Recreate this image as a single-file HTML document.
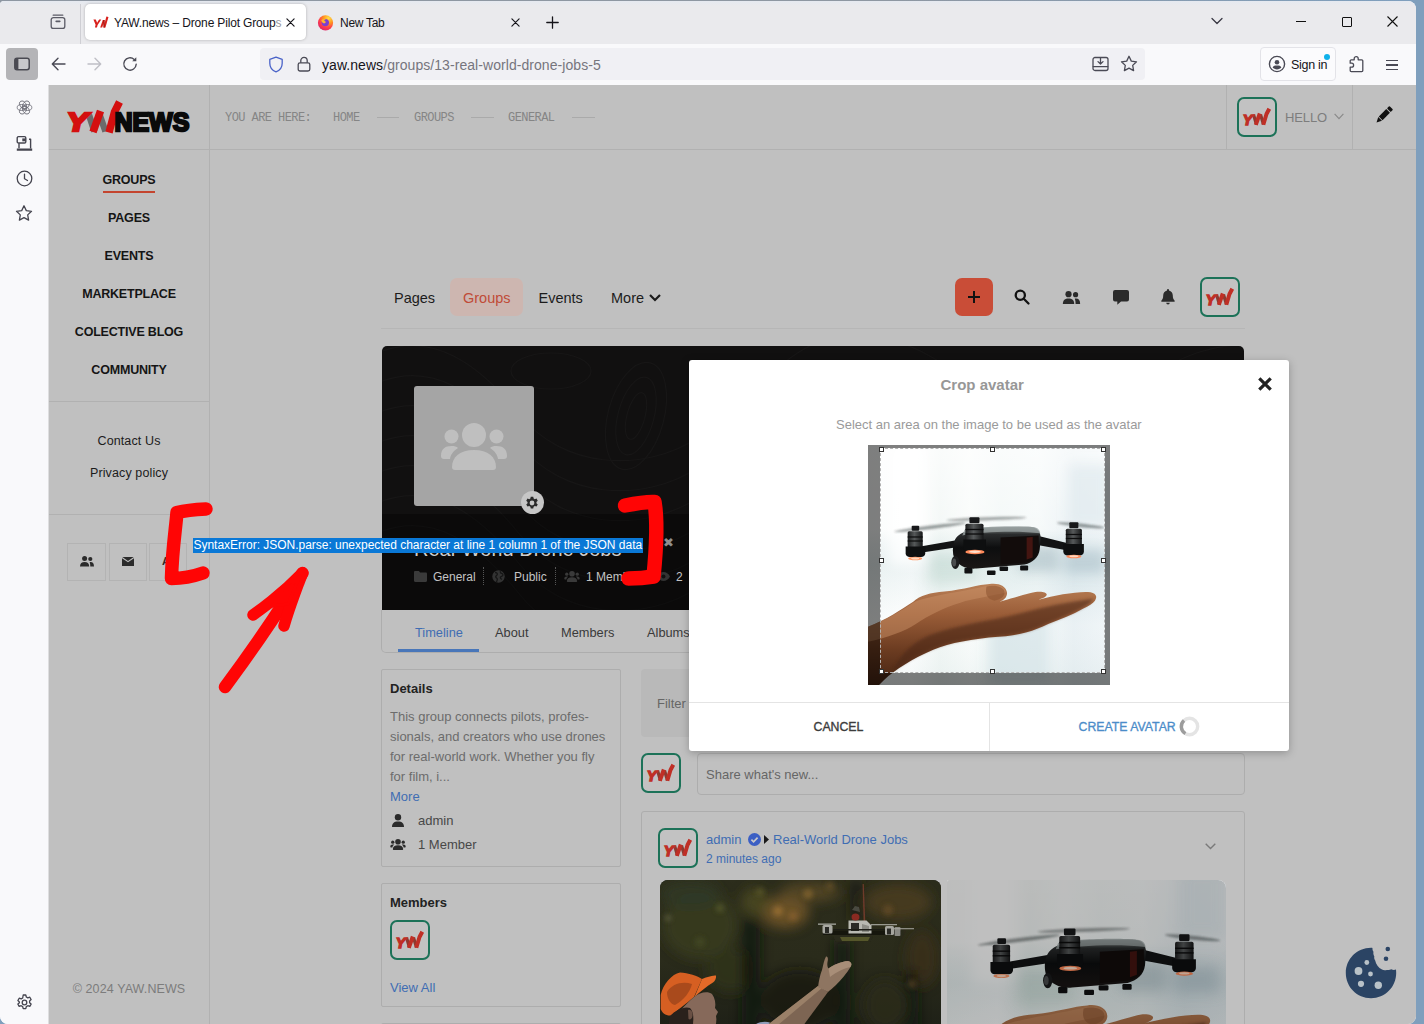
<!DOCTYPE html>
<html lang="en">
<head>
<meta charset="utf-8">
<title>YAW.news – Drone Pilot Groups</title>
<style>
*{box-sizing:border-box;margin:0;padding:0}
html,body{width:1424px;height:1024px;overflow:hidden}
body{position:relative;background:#7f9fbd;font-family:"Liberation Sans",sans-serif;color:#222;font-size:13px}
.abs{position:absolute}
#win{position:absolute;left:0;top:1px;width:1416px;height:1023px;background:#f9f9fb;border-radius:4px 8px 8px 8px;overflow:hidden}
#tabbar{position:absolute;left:0;top:0;width:1416px;height:43px;background:linear-gradient(#e5e9f0 0,#eaeaed 5px)}
#navbar{position:absolute;left:0;top:43px;width:1416px;height:41px;background:#f9f9fb}
#side{position:absolute;left:0;top:84px;width:48px;height:940px;background:#f9f9fb}
#page{position:absolute;left:49px;top:84px;width:1367px;height:940px;background:#c0c0c0;overflow:hidden}
.tab1{position:absolute;left:85px;top:3px;width:221px;height:36px;background:#fff;border-radius:5px;box-shadow:0 0 3px rgba(0,0,0,.25)}
.t{position:absolute;white-space:nowrap;line-height:1}
.ui{font-family:"Liberation Sans",sans-serif;font-size:12.5px;color:#15141a}
svg{position:absolute;overflow:visible}
/* page */
.ln{position:absolute;background:#b1b1b1}
.nav{position:absolute;left:0;width:160px;text-align:center;font-weight:bold;font-size:12.5px;letter-spacing:-.2px;color:#151515;line-height:1}
.lnk{position:absolute;left:0;width:160px;text-align:center;font-size:12.5px;letter-spacing:.12px;color:#1c1c1c;line-height:1}
.bc{position:absolute;top:26.5px;font-family:"Liberation Mono",monospace;font-size:12px;letter-spacing:-.57px;color:#858585;line-height:1;white-space:nowrap}
.av{position:absolute;width:40px;height:40px;border:2px solid #1c7258;border-radius:7px;background:#c2c2c2;overflow:hidden}
.av svg{left:-2px;top:-2px}
.sbtn{position:absolute;top:458px;width:39px;height:38px;border:1px solid #b3b3b3}
.tb{font-size:14.5px;color:#1c1c1c}
.card{position:absolute;border:1px solid #adadad;border-radius:2px}
.b{font-size:13px;line-height:1;position:absolute;white-space:nowrap}
.blue{color:#3f6db3}
.cm{font-size:12px;color:#c4c4c4}
.hd{position:absolute;width:5px;height:5px;background:#fff;border:1px solid #333}
</style>
</head>
<body>
<div class="abs" style="left:0;top:0;width:1400px;height:12px;background:linear-gradient(90deg,#8e97a2 0,#8e97a2 900px,#7f9fbd 1400px)"></div>
<div id="win">
  <div id="tabbar">
    <div class="abs" style="left:80px;top:3px;width:1px;height:40px;background:#cfcfd4"></div>
    <div class="tab1"></div>
    <!-- tab group icon -->
    <svg style="left:50px;top:13px" width="16" height="16" viewBox="0 0 16 16" fill="none" stroke="#5b5b66" stroke-width="1.3" stroke-linecap="round"><path d="M3.2 1.2h9.6"/><rect x="1.2" y="3.6" width="13.6" height="10.8" rx="2.2"/><path d="M6.2 7.4h3.6" stroke-width="1.6"/></svg>
    <!-- favicon YW -->
    <svg style="left:93px;top:14px" width="16" height="14" viewBox="0 0 16 14"><g fill="#d8201c"><path d="M0.4 4.6h2.4l1.3 3.1 2-3.1h2.2L4.6 10 4 12.6H1.9L2.6 9.7z"/><path d="M7.2 12.6 9.8 5h1.9L9.2 12.6z"/><path d="M10.4 12.6 13.4 1.4l2.1.7-3.1 10.5z"/><path d="M9.9 5h1.7l.5 7.6h-1.6z" fill="#b01813"/></g></svg>
    <div class="t ui" style="left:114px;top:15.7px;font-size:12px;letter-spacing:-.16px">YAW.news – Drone Pilot Group<span style="color:#9a9aa0">s</span></div>
    <svg style="left:285.5px;top:16.5px" width="9" height="9" viewBox="0 0 10 10" stroke="#15141a" stroke-width="1.3" stroke-linecap="round"><path d="M1 1l8 8M9 1l-8 8"/></svg>
    <!-- firefox icon -->
    <svg style="left:317px;top:13px" width="17" height="17" viewBox="0 0 17 17"><defs><radialGradient id="fx" cx="70%" cy="20%" r="90%"><stop offset="0" stop-color="#ffe14a"/><stop offset=".35" stop-color="#ff9a1f"/><stop offset=".7" stop-color="#ff3b4b"/><stop offset="1" stop-color="#d6246f"/></radialGradient></defs><circle cx="8.5" cy="8.8" r="7.6" fill="url(#fx)"/><circle cx="8.3" cy="8.6" r="3.7" fill="#7a3fd0"/><path d="M4.3 6.2c1.4-1.6 3.6-1.5 4.9-.4-1.4-.1-2 .6-1.9 1.3 1.2 0 1.7.9 1.2 1.6-1.3 1.3-3.6.500-4.2-2.5z" fill="#ffb52e"/></svg>
    <div class="t ui" style="left:340px;top:15.7px;font-size:12px;letter-spacing:-.28px">New Tab</div>
    <svg style="left:510.5px;top:16.5px" width="9" height="9" viewBox="0 0 10 10" stroke="#15141a" stroke-width="1.3" stroke-linecap="round"><path d="M1 1l8 8M9 1l-8 8"/></svg>
    <svg style="left:546px;top:15px" width="13" height="13" viewBox="0 0 13 13" stroke="#15141a" stroke-width="1.3" stroke-linecap="round"><path d="M6.5.8v11.4M.8 6.5h11.4"/></svg>
    <!-- window controls -->
    <svg style="left:1211px;top:16px" width="12" height="8" viewBox="0 0 12 8" fill="none" stroke="#3a3944" stroke-width="1.3" stroke-linecap="round" stroke-linejoin="round"><path d="M1 1.5l5 5 5-5"/></svg>
    <div class="abs" style="left:1296px;top:20px;width:10px;height:1px;background:#111"></div>
    <div class="abs" style="left:1342px;top:16px;width:10px;height:10px;border:1px solid #111;border-radius:1px"></div>
    <svg style="left:1387px;top:15px" width="11" height="11" viewBox="0 0 11 11" stroke="#111" stroke-width="1.1"><path d="M.5.5l10 10M10.5.500l-10 10"/></svg>
  </div>
  <div id="navbar">
    <div class="abs" style="left:6px;top:4px;width:32px;height:32px;border-radius:4px;background:#b4b4b7"></div>
    <svg style="left:14px;top:13px" width="16" height="14" viewBox="0 0 16 14"><rect x=".8" y="1.3" width="14.4" height="11.4" rx="2.2" fill="#c9c9cc" stroke="#4a4a52" stroke-width="1.5"/><path d="M.8 3.5a2.2 2.2 0 0 1 2.2-2.2h1.4v11.4H3a2.2 2.2 0 0 1-2.2-2.2z" fill="#4a4a52"/></svg>
    <!-- back / fwd / reload -->
    <svg style="left:51px;top:13px" width="15" height="14" viewBox="0 0 15 14" fill="none" stroke="#4a4a55" stroke-width="1.4" stroke-linecap="round" stroke-linejoin="round"><path d="M14 7H1.5M7 1.3 1.3 7 7 12.7"/></svg>
    <svg style="left:87px;top:13px" width="15" height="14" viewBox="0 0 15 14" fill="none" stroke="#bfbfc6" stroke-width="1.4" stroke-linecap="round" stroke-linejoin="round"><path d="M1 7h12.5M8 1.3 13.7 7 8 12.7"/></svg>
    <svg style="left:122px;top:12px" width="16" height="16" viewBox="0 0 16 16" fill="none" stroke="#4a4a55" stroke-width="1.4" stroke-linecap="round"><path d="M14.2 8.3a6.2 6.2 0 1 1-2-4.9"/><path d="M14.3 1.2v4.1h-4.1z" fill="#4a4a55" stroke="none"/></svg>
    <div class="abs" style="left:260px;top:4px;width:885px;height:32px;border-radius:4px;background:#f0f0f4"></div>
    <!-- shield -->
    <svg style="left:268px;top:12px" width="16" height="17" viewBox="0 0 16 17" fill="none" stroke="#4a63c8" stroke-width="1.3" stroke-linejoin="round"><path d="M8 1.1 1.8 3.4v3.8c0 4 2.5 7.2 6.2 8.6 3.7-1.4 6.2-4.6 6.2-8.6V3.4z"/></svg>
    <!-- lock -->
    <svg style="left:297px;top:12px" width="14" height="16" viewBox="0 0 14 16" fill="none" stroke="#4a4a55" stroke-width="1.3"><rect x="1.2" y="6.8" width="11.6" height="8.2" rx="1.8"/><path d="M3.8 6.8V4.6a3.2 3.2 0 0 1 6.4 0v2.2"/></svg>
    <div class="t" style="left:322px;top:13.5px;font-size:14px;color:#15141a;letter-spacing:.06px">yaw.news<span style="color:#76757d">/groups/13-real-world-drone-jobs-5</span></div>
    <!-- pocket / download -->
    <svg style="left:1092px;top:12px" width="17" height="16" viewBox="0 0 17 16" fill="none" stroke="#4a4a55" stroke-width="1.3" stroke-linecap="round" stroke-linejoin="round"><rect x="1" y="1.5" width="15" height="13" rx="2"/><path d="M1.2 10.6h14.6M8.5 1.8v5.6M6 5.6l2.5 2.4L11 5.6"/></svg>
    <svg style="left:1120px;top:11px" width="18" height="17" viewBox="0 0 18 17" fill="none" stroke="#4a4a55" stroke-width="1.3" stroke-linejoin="round"><path d="M9 1.3l2.3 4.8 5.2.7-3.8 3.6.9 5.2L9 13.1l-4.6 2.5.9-5.2L1.5 6.8l5.2-.7z"/></svg>
    <div class="abs" style="left:1260px;top:3px;width:76px;height:34px;border-radius:4px;background:#fbfbfd;border:1px solid #e3e3e8"></div>
    <svg style="left:1268px;top:11px" width="18" height="18" viewBox="0 0 18 18" fill="none" stroke="#4a4a55" stroke-width="1.4"><circle cx="9" cy="9" r="7.6"/><circle cx="9" cy="7.3" r="2.3" fill="#4a4a55" stroke="none"/><path d="M4.6 12.3c.8-1.3 2.2-1.7 4.4-1.7s3.6.4 4.4 1.7c-1 1.3-2.6 2.1-4.4 2.1s-3.4-.8-4.4-2.1z" fill="#4a4a55" stroke="none"/></svg>
    <div class="t ui" style="left:1291px;top:14.5px;font-size:12.5px;letter-spacing:-.3px">Sign in</div>
    <div class="abs" style="left:1324px;top:10px;width:6px;height:6px;border-radius:3px;background:#10b1ea"></div>
    <!-- puzzle -->
    <svg style="left:1348px;top:11px" width="17" height="18" viewBox="0 0 17 18" fill="none" stroke="#4a4a55" stroke-width="1.3" stroke-linejoin="round"><path d="M6.2 4.8V3.6a2 2 0 0 1 4 0v1.2h3.6a1 1 0 0 1 1 1v9.8a1 1 0 0 1-1 1H3.2a1 1 0 0 1-1-1v-3.4h1.4a2 2 0 0 0 0-4H2.2V5.8a1 1 0 0 1 1-1z"/></svg>
    <div class="abs" style="left:1386px;top:16px;width:12px;height:1.4px;background:#4a4a55"></div>
    <div class="abs" style="left:1386px;top:20.3px;width:12px;height:1.4px;background:#4a4a55"></div>
    <div class="abs" style="left:1386px;top:24.6px;width:12px;height:1.4px;background:#4a4a55"></div>
  </div>
  <div id="side">
    <!-- ai swirl -->
    <svg style="left:16px;top:14px" width="17" height="17" viewBox="0 0 17 17" fill="none" stroke="#6e6e78" stroke-width=".85"><ellipse cx="8.5" cy="5.6" rx="3" ry="4.4" transform="rotate(30 8.5 8.5)"/><ellipse cx="8.5" cy="5.6" rx="3" ry="4.4" transform="rotate(150 8.5 8.5)"/><ellipse cx="8.5" cy="5.6" rx="3" ry="4.4" transform="rotate(270 8.5 8.5)"/><ellipse cx="8.5" cy="11.4" rx="3" ry="4.4" transform="rotate(30 8.5 8.5)"/><ellipse cx="8.5" cy="11.4" rx="3" ry="4.4" transform="rotate(150 8.5 8.5)"/><ellipse cx="8.5" cy="11.4" rx="3" ry="4.4" transform="rotate(270 8.5 8.5)"/></svg>
    <!-- synced tabs -->
    <svg style="left:16px;top:50px" width="17" height="17" viewBox="0 0 17 17" fill="none" stroke="#45454f" stroke-width="1.4" stroke-linejoin="round"><rect x="1.2" y="1.6" width="8.6" height="6.4" rx="1.3"/><rect x="6.3" y="3.4" width="3.5" height="2.9" fill="#45454f" stroke="none"/><path d="M13 4.2h1.6v9.4"/><path d="M3 8.2v5"/><path d="M.8 14.6h15.4" stroke-width="2.2"/></svg>
    <!-- clock -->
    <svg style="left:16px;top:85px" width="17" height="17" viewBox="0 0 17 17" fill="none" stroke="#45454f" stroke-width="1.3" stroke-linecap="round"><circle cx="8.5" cy="8.5" r="7.3"/><path d="M8.5 4.2v4.5l3 1.8"/></svg>
    <!-- star -->
    <svg style="left:15px;top:119px" width="18" height="18" viewBox="0 0 18 17" fill="none" stroke="#45454f" stroke-width="1.3" stroke-linejoin="round"><path d="M9 1.3l2.3 4.8 5.2.7-3.8 3.6.9 5.2L9 13.1l-4.6 2.5.9-5.2L1.5 6.8l5.2-.7z"/></svg>
    <!-- gear -->
    <svg style="left:16px;top:909px" width="17" height="17" viewBox="0 0 17 17" fill="none" stroke="#45454f" stroke-width="1.3" stroke-linejoin="round"><circle cx="8.5" cy="8.5" r="2.3"/><path d="M7.2 1h2.6l.5 2 1.5.9 2-.7 1.3 2.3-1.5 1.4v1.8l1.5 1.4-1.3 2.3-2-.7-1.5.9-.5 2H7.2l-.5-2-1.5-.9-2 .7-1.3-2.3 1.5-1.4V7.9L1.9 6.5l1.3-2.3 2 .7 1.5-.9z"/></svg>
  </div>
  <div class="abs" style="left:48px;top:84px;width:1px;height:940px;background:#dededf"></div>
  <div id="page">
    <!-- coordinates inside #page are target minus (49,85) -->
    <!-- header lines -->
    <div class="ln" style="left:160px;top:0;width:1px;height:940px"></div>
    <div class="ln" style="left:0;top:64px;width:1367px;height:1px"></div>
    <div class="ln" style="left:1177px;top:0;width:1px;height:64px"></div>
    <div class="ln" style="left:1303px;top:0;width:1px;height:64px"></div>
    <!-- logo -->
    <svg style="left:16px;top:12px" width="130" height="40" viewBox="65 97 130 40">
      <g stroke-linecap="butt" fill="none">
        <path d="M88.5 113.5 94.5 131.5" stroke="#6b6b6b" stroke-width="6.5"/>
        <path d="M99 113 105.5 131.5" stroke="#6b6b6b" stroke-width="6.5"/>
        <path d="M93 132 100.5 111" stroke="#d40f0f" stroke-width="7.5"/>
        <path d="M109 132.5 114.5 112 119.5 102" stroke="#d40f0f" stroke-width="7.5" stroke-linejoin="round"/>
      </g>
      <text x="66.8" y="131.2" font-family="Liberation Sans, sans-serif" font-weight="bold" font-style="italic" font-size="26.5" fill="#d40f0f" stroke="#d40f0f" stroke-width="2.6" textLength="21" lengthAdjust="spacingAndGlyphs">Y</text>
      <text x="114.4" y="130.8" font-family="Liberation Sans, sans-serif" font-weight="bold" font-size="26.5" fill="#0a0a0a" stroke="#0a0a0a" stroke-width="2.4" textLength="75" lengthAdjust="spacingAndGlyphs">NEWS</text>
    </svg>
    <!-- breadcrumb -->
    <div class="bc" style="left:176px">YOU ARE HERE:</div>
    <div class="bc" style="left:284px">HOME</div>
    <div class="ln" style="left:328px;top:31.5px;width:22px;height:1px;background:#aaa"></div>
    <div class="bc" style="left:365px">GROUPS</div>
    <div class="ln" style="left:422px;top:31.5px;width:23px;height:1px;background:#aaa"></div>
    <div class="bc" style="left:459px">GENERAL</div>
    <div class="ln" style="left:523px;top:31.5px;width:23px;height:1px;background:#aaa"></div>
    <!-- header user -->
    <div class="av" style="left:1188px;top:12px"><svg width="40" height="40" viewBox="0 0 40 40"><g fill="none" stroke-linecap="butt"><path d="M16.5 17.5 19.5 27.5" stroke="#8c3a30" stroke-width="3.2"/><path d="M23.5 17.5 26.5 27.5" stroke="#8c3a30" stroke-width="3.2"/><path d="M18.8 27.8 22.8 16.5" stroke="#bf2f26" stroke-width="4"/><path d="M26.3 27.8 29.5 17 32.3 11.8" stroke="#bf2f26" stroke-width="4" stroke-linejoin="round"/></g><text x="5.8" y="27.6" font-family="Liberation Sans, sans-serif" font-weight="bold" font-style="italic" font-size="14.5" fill="#bf2f26" stroke="#bf2f26" stroke-width="1.4">Y</text></svg></div>
    <div class="t" style="left:1236px;top:25.5px;font-size:13px;color:#7d7d7d;letter-spacing:-.1px">HELLO</div>
    <svg style="left:1285px;top:28px" width="10" height="7" viewBox="0 0 10 7" fill="none" stroke="#8a8a8a" stroke-width="1.2"><path d="M.6.8l4.4 4.8L9.4.8"/></svg>
    <svg style="left:1326px;top:21px" width="18" height="18" viewBox="0 0 18 18"><g transform="rotate(45 9 9)" fill="#111"><rect x="6.4" y="-1.2" width="5.2" height="3.4" rx=".8"/><rect x="6.4" y="3.2" width="5.2" height="10.5"/><path d="M6.4 14.5h5.2L9 19.6z"/></g></svg>

    <!-- sidebar nav -->
    <div class="nav" style="top:89px">GROUPS</div>
    <div class="abs" style="left:54px;top:105.5px;width:52px;height:2px;background:#c4452f"></div>
    <div class="nav" style="top:127px">PAGES</div>
    <div class="nav" style="top:165px">EVENTS</div>
    <div class="nav" style="top:203px">MARKETPLACE</div>
    <div class="nav" style="top:241px">COLECTIVE BLOG</div>
    <div class="nav" style="top:279px">COMMUNITY</div>
    <div class="ln" style="left:0;top:316px;width:160px;height:1px"></div>
    <div class="lnk" style="top:350px">Contact Us</div>
    <div class="lnk" style="top:382px">Privacy policy</div>
    <div class="ln" style="left:0;top:429px;width:160px;height:1px"></div>
    <div class="sbtn" style="left:18px"></div>
    <div class="sbtn" style="left:60px;width:38px"></div>
    <div class="sbtn" style="left:100px;width:38px"></div>
    <svg style="left:31px;top:471px" width="14" height="11" viewBox="0 0 14 11" fill="#2b2b2b"><circle cx="4.6" cy="2.6" r="2.5"/><path d="M0 10.5C0 7.4 1.8 6 4.6 6s4.6 1.4 4.6 4.5z"/><circle cx="10.3" cy="3" r="2.1"/><path d="M9.6 6.2c2.7-.5 4.4.9 4.4 4.3h-3.7c0-1.9-.2-3.2-.7-4.3z"/></svg>
    <svg style="left:73px;top:472px" width="12" height="9" viewBox="0 0 12 9" fill="#2b2b2b"><path d="M0 1.3 6 5.3l6-4V9H0z"/><path d="M.3 0h11.4L6 3.9z"/></svg>
    <div class="t" style="left:113px;top:471px;font-size:11px;font-weight:bold;color:#2b2b2b">A</div>
    <div class="lnk" style="top:897.5px;color:#7c7c7c;font-size:12.5px;letter-spacing:.1px">© 2024 YAW.NEWS</div>

    <!-- toolbar -->
    <div class="t tb" style="left:345px;top:206px">Pages</div>
    <div class="abs" style="left:401px;top:193px;width:73px;height:38px;border-radius:7px;background:#cdb6b0"></div>
    <div class="t tb" style="left:414px;top:206px;color:#c04b37">Groups</div>
    <div class="t tb" style="left:489.5px;top:206px">Events</div>
    <div class="t tb" style="left:562px;top:206px">More</div>
    <svg style="left:600px;top:209px" width="12" height="8" viewBox="0 0 12 8" fill="none" stroke="#1a1a1a" stroke-width="2.2"><path d="M1 1l5 5 5-5"/></svg>
    <div class="abs" style="left:906px;top:193px;width:38px;height:38px;border-radius:7px;background:#c94d37"></div>
    <div class="abs" style="left:919px;top:210.7px;width:12px;height:2.6px;background:#111"></div>
    <div class="abs" style="left:923.7px;top:206px;width:2.6px;height:12px;background:#111"></div>
    <svg style="left:965px;top:204px" width="16" height="16" viewBox="0 0 16 16" fill="none" stroke="#111" stroke-width="2.3" stroke-linecap="round"><circle cx="6.3" cy="6.3" r="4.6"/><path d="M10 10l4.5 4.5"/></svg>
    <svg style="left:1012.5px;top:205.5px" width="19" height="13" viewBox="0 0 14 10.5" fill="#2b2b2b"><circle cx="4.6" cy="2.6" r="2.5"/><path d="M0 10.5C0 7.4 1.8 6 4.6 6s4.6 1.4 4.6 4.5z"/><circle cx="10.3" cy="3" r="2.1"/><path d="M9.6 6.2c2.7-.5 4.4.9 4.4 4.3h-3.7c0-1.9-.2-3.2-.7-4.3z"/></svg>
    <svg style="left:1064px;top:205px" width="16" height="15" viewBox="0 0 16 15" fill="#2b2b2b"><path d="M2 0h12a2 2 0 0 1 2 2v7.5a2 2 0 0 1-2 2H8L4.3 14.7v-3.2H2a2 2 0 0 1-2-2V2a2 2 0 0 1 2-2z"/></svg>
    <svg style="left:1112px;top:204px" width="14" height="16" viewBox="0 0 14 16" fill="#2b2b2b"><path d="M7 0a1 1 0 0 1 1 1v.6c2.3.5 3.8 2.4 3.8 4.9 0 2.6.6 3.8 1.7 4.9.5.5.2 1.4-.6 1.4H1.1c-.8 0-1.1-.9-.6-1.4C1.6 10.3 2.2 9.1 2.2 6.5c0-2.5 1.5-4.4 3.8-4.9V1a1 1 0 0 1 1-1z"/><path d="M5.2 13.8h3.6a1.8 1.8 0 0 1-3.6 0z"/></svg>
    <div class="av" style="left:1151px;top:192px"><svg width="40" height="40" viewBox="0 0 40 40"><g fill="none" stroke-linecap="butt"><path d="M16.5 17.5 19.5 27.5" stroke="#8c3a30" stroke-width="3.2"/><path d="M23.5 17.5 26.5 27.5" stroke="#8c3a30" stroke-width="3.2"/><path d="M18.8 27.8 22.8 16.5" stroke="#bf2f26" stroke-width="4"/><path d="M26.3 27.8 29.5 17 32.3 11.8" stroke="#bf2f26" stroke-width="4" stroke-linejoin="round"/></g><text x="5.8" y="27.6" font-family="Liberation Sans, sans-serif" font-weight="bold" font-style="italic" font-size="14.5" fill="#bf2f26" stroke="#bf2f26" stroke-width="1.4">Y</text></svg></div>
    <div class="ln" style="left:332px;top:243px;width:864px;height:1px;background:#b6b6b6"></div>
    <!-- cover : target (381,346)-(1245,610) => page (332,261) 864x264 -->
    <div class="abs" id="cover" style="left:333px;top:261px;width:862px;height:264px;border-radius:5px 5px 0 0;background:#111010;overflow:hidden"><div class="abs" style="left:-1px;top:0;width:864px;height:264px">
      <svg style="left:0;top:0" width="864" height="264" viewBox="0 0 864 264" fill="none" stroke="#171616" stroke-width="1.2">
        <path d="M-10 40c60-30 110 10 150 60s120 60 180 20 90-110 170-100 110 80 190 70 120-70 200-60"/>
        <path d="M-10 70c60-30 110 10 150 60s120 60 180 20 90-110 170-100 110 80 190 70 120-70 200-60"/>
        <path d="M-10 100c60-30 110 10 150 60s120 60 180 20 90-110 170-100 110 80 190 70 120-70 200-60"/>
        <path d="M-10 130c60-30 110 10 150 60s120 60 180 20 90-110 170-100 110 80 190 70 120-70 200-60"/>
        <path d="M-10 160c60-30 110 10 150 60s120 60 180 20 90-110 170-100 110 80 190 70 120-70 200-60"/>
        <path d="M-10 190c60-30 110 10 150 60s120 60 180 20 90-110 170-100 110 80 190 70 120-70 200-60"/>
        <path d="M-10 10c60-30 110 10 150 60s120 60 180 20 90-110 170-100 110 80 190 70 120-70 200-60"/>
        <ellipse cx="255" cy="70" rx="28" ry="55" transform="rotate(15 255 70)"/>
        <ellipse cx="255" cy="70" rx="18" ry="40" transform="rotate(15 255 70)"/>
        <ellipse cx="255" cy="70" rx="9" ry="24" transform="rotate(15 255 70)"/>
        <ellipse cx="170" cy="25" rx="40" ry="18"/>
      </svg>
      <div class="abs" style="left:0;top:168px;width:864px;height:96px;background:rgba(0,0,0,.35)"></div>
      <!-- avatar placeholder -->
      <div class="abs" style="left:33px;top:40px;width:120px;height:120px;border-radius:3px;background:#a5a5a5"></div>
      <svg style="left:60px;top:77px" width="66" height="47" viewBox="0 0 66 47" fill="#bfbfbf"><circle cx="33" cy="12" r="12"/><path d="M14 47c-2 0-3-1-3-3 0-10 8-17 22-17s22 7 22 17c0 2-1 3-3 3z"/><circle cx="10.5" cy="13.5" r="7"/><path d="M3 36c-2 0-3-1-3-3 0-7 4-10 10.5-10 3 0 5 .5 6.5 2-5 3-7.5 7-8 11z"/><circle cx="55.5" cy="13.5" r="7"/><path d="M63 36c2 0 3-1 3-3 0-7-4-10-10.5-10-3 0-5 .5-6.5 2 5 3 7.5 7 8 11z"/></svg>
      <div class="abs" style="left:139.5px;top:145px;width:23px;height:23px;border-radius:12px;background:#c6c6c6"></div>
      <svg style="left:144px;top:149.5px" width="14" height="14" viewBox="0 0 17 17" fill="#2a2a2a"><path fill-rule="evenodd" d="M7 .8h3l.5 2.2 1.4.8 2.1-.7 1.5 2.6-1.6 1.5v1.6l1.6 1.5-1.5 2.6-2.1-.7-1.4.8-.5 2.2H7l-.5-2.2-1.4-.8-2.1.7-1.5-2.6 1.6-1.5V7.2L1.5 5.7 3 3.1l2.1.7 1.4-.8zM8.5 5.6a2.9 2.9 0 1 0 0 5.8 2.9 2.9 0 0 0 0-5.8z"/></svg>
      <!-- title + meta -->
      <div class="t" style="left:33px;top:192.5px;font-size:20px;color:#cfcfcf">Real-World Drone Jobs</div>
      <svg style="left:33px;top:225px" width="13" height="11" viewBox="0 0 13 11" fill="#3a3a3a"><path d="M1.2 0h3.6l1.4 1.6h5.6c.7 0 1.2.5 1.2 1.2v7c0 .7-.5 1.2-1.2 1.2H1.2C.5 11 0 10.5 0 9.8V1.2C0 .5.5 0 1.2 0z"/></svg>
      <div class="t cm" style="left:52px;top:225px">General</div>
      <div class="abs" style="left:102px;top:221px;width:0;height:18px;border-left:1px dotted #555"></div>
      <svg style="left:111px;top:224px" width="13" height="13" viewBox="0 0 13 13"><circle cx="6.5" cy="6.5" r="6.2" fill="#333"/><path d="M3 2.5c1.5 0 2.5.8 2.3 2s-1.8 1.2-1.6 2.4 1.5.9 1.6 2.2-.6 2-.8 2.9M8.5 1.2c-.6 1 .2 1.8 1.2 2.2s1.6 1.2 1 2.2-1.7.5-2.2 1.5.4 1.8 1.4 2.3" stroke="#161616" stroke-width="1.3" fill="none"/></svg>
      <div class="t cm" style="left:133px;top:225px">Public</div>
      <div class="abs" style="left:174px;top:221px;width:0;height:18px;border-left:1px dotted #555"></div>
      <svg style="left:182.5px;top:225px" width="16" height="11" viewBox="0 0 66 47" fill="#3a3a3a"><circle cx="33" cy="12" r="12"/><path d="M14 47c-2 0-3-1-3-3 0-10 8-17 22-17s22 7 22 17c0 2-1 3-3 3z"/><circle cx="10.5" cy="13.5" r="7"/><path d="M3 36c-2 0-3-1-3-3 0-7 4-10 10.5-10 3 0 5 .5 6.5 2-5 3-7.5 7-8 11z"/><circle cx="55.5" cy="13.5" r="7"/><path d="M63 36c2 0 3-1 3-3 0-7-4-10-10.5-10-3 0-5 .5-6.5 2 5 3 7.5 7 8 11z"/></svg>
      <div class="t cm" style="left:205px;top:225px">1 Member</div>
      <svg style="left:276px;top:226px" width="13" height="9" viewBox="0 0 13 9"><path d="M0 4.5C1.5 1.7 3.8 0 6.5 0S11.5 1.7 13 4.5C11.5 7.3 9.2 9 6.5 9S1.5 7.3 0 4.5z" fill="#333"/><circle cx="6.5" cy="4.5" r="2" fill="#111"/></svg>
      <div class="t cm" style="left:295px;top:225px">2</div>
      <div class="t" style="left:282px;top:190px;font-size:13px;color:#8e8e8e;font-family:'DejaVu Sans',sans-serif">✖</div>
    </div></div>

    <!-- profile tabs : target (381,610)-(1245,652) -->
    <div class="abs" style="left:332px;top:525px;width:864px;height:43px;border:1px solid #adadad;border-top:0;border-radius:0 0 5px 5px"></div>
    <div class="b blue" style="left:366px;top:542px;font-size:12.8px">Timeline</div>
    <div class="abs" style="left:349px;top:564px;width:81px;height:3px;background:#4876b9"></div>
    <div class="b" style="left:446px;top:542px;color:#3a3a3a;font-size:12.8px">About</div>
    <div class="b" style="left:512px;top:542px;color:#3a3a3a;font-size:12.8px">Members</div>
    <div class="b" style="left:598px;top:542px;color:#3a3a3a;font-size:12.8px">Albums</div>

    <!-- Details card : target (381,669)-(621,866) -->
    <div class="card" style="left:332px;top:584px;width:240px;height:198px"></div>
    <div class="b" style="left:341px;top:597px;font-weight:bold;color:#222">Details</div>
    <div class="b" style="left:341px;top:625px;color:#6c6c6c">This group connects pilots, profes-</div>
    <div class="b" style="left:341px;top:645px;color:#6c6c6c">sionals, and creators who use drones</div>
    <div class="b" style="left:341px;top:665px;color:#6c6c6c">for real-world work. Whether you fly</div>
    <div class="b" style="left:341px;top:685px;color:#6c6c6c">for film, i...</div>
    <div class="b blue" style="left:341px;top:705px">More</div>
    <svg style="left:343px;top:729px" width="12" height="13" viewBox="0 0 12 13" fill="#2b2b2b"><circle cx="6" cy="3.2" r="3.2"/><path d="M0 13c0-3.6 1.8-5.6 6-5.6s6 2 6 5.6z"/></svg>
    <div class="b" style="left:369px;top:729px;color:#484848">admin</div>
    <svg style="left:341px;top:754px" width="16" height="11" viewBox="0 0 66 47" fill="#2b2b2b"><circle cx="33" cy="12" r="12"/><path d="M14 47c-2 0-3-1-3-3 0-10 8-17 22-17s22 7 22 17c0 2-1 3-3 3z"/><circle cx="10.5" cy="13.5" r="7"/><path d="M3 36c-2 0-3-1-3-3 0-7 4-10 10.5-10 3 0 5 .5 6.5 2-5 3-7.5 7-8 11z"/><circle cx="55.5" cy="13.5" r="7"/><path d="M63 36c2 0 3-1 3-3 0-7-4-10-10.5-10-3 0-5 .5-6.5 2 5 3 7.5 7 8 11z"/></svg>
    <div class="b" style="left:369px;top:753px;color:#484848">1 Member</div>

    <!-- Members card : target (381,883)-(621,1007) -->
    <div class="card" style="left:332px;top:798px;width:240px;height:124px"></div>
    <div class="b" style="left:341px;top:811px;font-weight:bold;color:#222">Members</div>
    <div class="av" style="left:341px;top:835px"><svg width="40" height="40" viewBox="0 0 40 40"><g fill="none" stroke-linecap="butt"><path d="M16.5 17.5 19.5 27.5" stroke="#8c3a30" stroke-width="3.2"/><path d="M23.5 17.5 26.5 27.5" stroke="#8c3a30" stroke-width="3.2"/><path d="M18.8 27.8 22.8 16.5" stroke="#bf2f26" stroke-width="4"/><path d="M26.3 27.8 29.5 17 32.3 11.8" stroke="#bf2f26" stroke-width="4" stroke-linejoin="round"/></g><text x="5.8" y="27.6" font-family="Liberation Sans, sans-serif" font-weight="bold" font-style="italic" font-size="14.5" fill="#bf2f26" stroke="#bf2f26" stroke-width="1.4">Y</text></svg></div>
    <div class="b blue" style="left:341px;top:896px">View All</div>
    <div class="card" style="left:332px;top:938px;width:240px;height:40px"></div>

    <!-- right column -->
    <div class="abs" style="left:592px;top:584px;width:604px;height:68px;border-radius:4px;background:#b9b9b9"></div>
    <div class="b" style="left:608px;top:612px;color:#666">Filter</div>
    <div class="av" style="left:592px;top:668px"><svg width="40" height="40" viewBox="0 0 40 40"><g fill="none" stroke-linecap="butt"><path d="M16.5 17.5 19.5 27.5" stroke="#8c3a30" stroke-width="3.2"/><path d="M23.5 17.5 26.5 27.5" stroke="#8c3a30" stroke-width="3.2"/><path d="M18.8 27.8 22.8 16.5" stroke="#bf2f26" stroke-width="4"/><path d="M26.3 27.8 29.5 17 32.3 11.8" stroke="#bf2f26" stroke-width="4" stroke-linejoin="round"/></g><text x="5.8" y="27.6" font-family="Liberation Sans, sans-serif" font-weight="bold" font-style="italic" font-size="14.5" fill="#bf2f26" stroke="#bf2f26" stroke-width="1.4">Y</text></svg></div>
    <div class="abs" style="left:648px;top:668px;width:548px;height:42px;border:1px solid #adadad;border-radius:4px"></div>
    <div class="b" style="left:657px;top:683px;color:#666">Share what's new...</div>

    <!-- post card : target (641,811) -->
    <div class="card" style="left:592px;top:726px;width:604px;height:260px;border-radius:3px 3px 0 0"></div>
    <div class="av" style="left:609px;top:743px"><svg width="40" height="40" viewBox="0 0 40 40"><g fill="none" stroke-linecap="butt"><path d="M16.5 17.5 19.5 27.5" stroke="#8c3a30" stroke-width="3.2"/><path d="M23.5 17.5 26.5 27.5" stroke="#8c3a30" stroke-width="3.2"/><path d="M18.8 27.8 22.8 16.5" stroke="#bf2f26" stroke-width="4"/><path d="M26.3 27.8 29.5 17 32.3 11.8" stroke="#bf2f26" stroke-width="4" stroke-linejoin="round"/></g><text x="5.8" y="27.6" font-family="Liberation Sans, sans-serif" font-weight="bold" font-style="italic" font-size="14.5" fill="#bf2f26" stroke="#bf2f26" stroke-width="1.4">Y</text></svg></div>
    <div class="b blue" style="left:657px;top:748px">admin</div>
    <svg style="left:698.5px;top:748px" width="13" height="13" viewBox="0 0 13 13"><circle cx="6.5" cy="6.5" r="6.5" fill="#3b5fc4"/><path d="M3.4 6.7l2.2 2.2 4-4.3" fill="none" stroke="#c9c9c9" stroke-width="1.7"/></svg>
    <svg style="left:715px;top:750px" width="5" height="9" viewBox="0 0 5 9"><path d="M0 0l5 4.5L0 9z" fill="#1a1a1a"/></svg>
    <div class="b blue" style="left:724px;top:748px">Real-World Drone Jobs</div>
    <div class="b blue" style="left:657px;top:768px;font-size:12px">2 minutes ago</div>
    <svg style="left:1156px;top:758px" width="11" height="7" viewBox="0 0 11 7" fill="none" stroke="#7a7a7a" stroke-width="1.4"><path d="M.7.8l4.8 4.8L10.3.8"/></svg>
<!--PHOTOS-->
    <!-- post photos : photo1 target (660,880)-(941,..) ; photo2 (947,880)-(1226,..) -->
    <div class="abs" style="left:611px;top:795px;width:281px;height:160px;border-radius:8px 8px 0 0;overflow:hidden;background:#222">
      <svg style="left:0;top:0" width="281" height="200" viewBox="0 0 281 200">
<defs>
<linearGradient id="fbgf" x1="0" y1="0" x2="0" y2="1">
<stop offset="0" stop-color="#2c2d1c"/><stop offset=".4" stop-color="#2a2b1b"/><stop offset=".75" stop-color="#1e2017"/><stop offset="1" stop-color="#1a1c15"/>
</linearGradient>
<filter id="fbf" x="-30%" y="-30%" width="160%" height="160%"><feGaussianBlur stdDeviation="6"/></filter>
<filter id="fb2f" x="-30%" y="-30%" width="160%" height="160%"><feGaussianBlur stdDeviation="2.5"/></filter>
<filter id="fb3f" x="-30%" y="-30%" width="160%" height="160%"><feGaussianBlur stdDeviation=".5"/></filter>
</defs>
<rect width="281" height="200" fill="url(#fbgf)"/>
<g filter="url(#fbf)">
<ellipse cx="40" cy="45" rx="38" ry="34" fill="#363c1f" opacity=".9"/>
<ellipse cx="30" cy="14" rx="30" ry="14" fill="#303926" opacity=".9"/>
<ellipse cx="125" cy="32" rx="24" ry="16" fill="#6e5228" opacity=".95"/>
<ellipse cx="150" cy="12" rx="30" ry="10" fill="#5a4a24" opacity=".8"/>
<ellipse cx="95" cy="22" rx="14" ry="14" fill="#4c4a22" opacity=".8"/>
<ellipse cx="238" cy="22" rx="34" ry="18" fill="#4a3c20" opacity=".85"/>
<ellipse cx="262" cy="78" rx="16" ry="28" fill="#3c3019" opacity=".8"/>
<ellipse cx="70" cy="90" rx="24" ry="22" fill="#30351d" opacity=".8"/>
<rect x="82" y="40" width="18" height="160" fill="#13140e" opacity=".85"/>
<rect x="174" y="60" width="16" height="140" fill="#14150f" opacity=".8"/>
<rect x="246" y="90" width="12" height="110" fill="#14150f" opacity=".8"/>
<rect x="190" y="0" width="12" height="40" fill="#191a12" opacity=".7"/>
<ellipse cx="140" cy="120" rx="40" ry="30" fill="#1a1c14" opacity=".8"/>
<ellipse cx="225" cy="125" rx="22" ry="26" fill="#2b2a17" opacity=".8"/>
</g>
<g filter="url(#fb2f)">
<circle cx="118" cy="31" r="5" fill="#9a6f36" opacity=".8"/>
<circle cx="133" cy="36" r="4.5" fill="#8a6030" opacity=".8"/>
<circle cx="8" cy="38" r="3" fill="#6a6a4a" opacity=".7"/>
<circle cx="100" cy="12" r="4" fill="#5e5a2a" opacity=".7"/>
<circle cx="170" cy="6" r="4" fill="#6a5226" opacity=".7"/>
<circle cx="252" cy="104" r="4" fill="#5a4322" opacity=".7"/>
<circle cx="148" cy="14" r="5" fill="#8a6a30" opacity=".7"/>
<circle cx="60" cy="28" r="4" fill="#5a5e2c" opacity=".7"/>
<circle cx="228" cy="30" r="5" fill="#6a4e26" opacity=".7"/>
<circle cx="40" cy="62" r="5" fill="#4a4e26" opacity=".6"/>
</g>
<!-- quad drone -->
<g filter="url(#fb3f)">
<path d="M202.6 4 L203.8 4 L205.3 42 L203.6 42z" fill="#6e3a2c"/>
<rect x="163" y="50.5" width="78" height="4.5" rx="1" fill="#141410"/>
<path d="M172 55 h42 l-4 6.5 h-34z" fill="#2a2b1a"/>
<path d="M180 57 h30 l-2 4 h-26z" fill="#55562c"/>
<path d="M188.5 40.5 h18 l5 5 v8 h-23z" fill="#b9b9b2"/>
<path d="M191 43 h8 v8 h-8z" fill="#2a2a28"/>
<path d="M202 44 l7 2 v6 h-7z" fill="#8d8d86"/>
<ellipse cx="195.5" cy="37" rx="4" ry="3.6" fill="#8a2a22"/>
<path d="M192 30 l3 -4 l4 1 l1 5z" fill="#4a4a40"/>
<rect x="162.5" y="45" width="10" height="8.5" rx="1.5" fill="#a9a9a2"/>
<rect x="165" y="47" width="4" height="6" fill="#2a2a28"/>
<rect x="225" y="46" width="9" height="9" rx="1.5" fill="#a5a59e"/>
<rect x="234.5" y="47" width="6" height="9" rx="1" fill="#8a8a84"/>
<rect x="227" y="48.5" width="4" height="6" fill="#2a2a28"/>
<rect x="158" y="43.5" width="18" height="1.3" fill="#b4b4ae" opacity=".9"/>
<rect x="211" y="44" width="26" height="1.3" fill="#b4b4ae" opacity=".8"/>
<rect x="232" y="48" width="22" height="1.3" fill="#a4a49e" opacity=".8"/>
<rect x="173" y="49" width="52" height="1.5" fill="#1a1a16"/>
</g>
<!-- arm + hand -->
<path d="M101 150 L158 106 L168 112 L140 150z" fill="#7d6553"/>
<path d="M101 150 L158 106 L162 108 L112 150z" fill="#9a8068"/>
<path d="M158 107 C159 100 160 95 162 90 C163 86 164 80 166 76.5 C167.5 76 168.5 78 167.5 82 C167 85 167.5 87 168.5 88.5 C173 85 181 81.5 188 81 C191 81.5 192.5 84 190.5 87 C187 93 181 100 176 105 C173 108 170 110 168 112z" fill="#8e7561"/>
<path d="M168.5 88.5 C173 85 181 81.5 188 81 C191 81.5 192.5 84 190.5 87 C185 88 176 92 170 97z" fill="#a88e78"/>
<path d="M96 144 C100 141.5 106 141 110 142.5 L104 150 L94 150z" fill="#8f9cb8"/>
<!-- cap -->
<path d="M.7 115 C3 104 12 94 20 92.5 C28 93 38 96 42 99 L34 117 C26 124 16 131 11 135.5 C6 136 2 133 .7 129z" fill="#d65f22"/>
<path d="M7 112 C12 104 22 101 32 104 C30 112 24 120 15 125 C10 124 7 118 7 112z" fill="#a94a1c"/>
<path d="M42 99 C47 97 53 95.5 56 95.5 C56.5 98 55 101 53 102.5 C47 106 40 112 34.5 117z" fill="#e46a28"/>
<!-- face / head -->
<path d="M34 117 C40 112 48 111 52 114 C55 118 56 124 55 128 L58 132 L56 136 C57 140 56 146 54 150 L24 150 L18 134 C22 128 28 122 34 117z" fill="#86695a"/>
<path d="M10 136 C16 130 24 126 30 128 C34 132 34 140 32 150 L8 150z" fill="#2a211c"/>
<path d="M28 130 C31 129 33 132 32.5 136 C32 139 30 140 28.5 139z" fill="#6a5044"/>
</svg>
    </div>
    <div class="abs" style="left:898px;top:795px;width:279px;height:160px;border-radius:2px 8px 0 0;overflow:hidden;background:#ccc">
      <svg style="left:0;top:-35px" width="279" height="277" viewBox="0 0 241 239" preserveAspectRatio="none">
<defs>
<linearGradient id="bga" x1="0" y1="0" x2="1" y2="0">
<stop offset="0" stop-color="#f8fbfa"/><stop offset=".18" stop-color="#ffffff"/><stop offset=".3" stop-color="#eff5f3"/><stop offset=".42" stop-color="#f8fbfa"/><stop offset=".55" stop-color="#eff6f5"/><stop offset=".7" stop-color="#f3f8f8"/><stop offset=".85" stop-color="#e4edf1"/><stop offset="1" stop-color="#edf3f6"/>
</linearGradient>
<linearGradient id="bgva" x1="0" y1="0" x2="0" y2="1">
<stop offset="0" stop-color="#ffffff" stop-opacity=".7"/><stop offset=".35" stop-color="#ffffff" stop-opacity=".3"/><stop offset=".5" stop-color="#a9c8cc" stop-opacity=".2"/><stop offset=".75" stop-color="#ffffff" stop-opacity=".2"/><stop offset="1" stop-color="#dbe7e7" stop-opacity=".35"/>
</linearGradient>
<linearGradient id="handa" x1="0" y1="0" x2="0" y2="1">
<stop offset="0" stop-color="#b97f56"/><stop offset=".3" stop-color="#9a5d38"/><stop offset=".65" stop-color="#6c3c21"/><stop offset="1" stop-color="#452413"/>
</linearGradient>
<linearGradient id="bodya" x1="0" y1="0" x2="0" y2="1">
<stop offset="0" stop-color="#8b9291"/><stop offset=".18" stop-color="#2a2c2d"/><stop offset=".5" stop-color="#0d0e0f"/><stop offset="1" stop-color="#1a1615"/>
</linearGradient>
<linearGradient id="mota" x1="0" y1="0" x2="1" y2="0">
<stop offset="0" stop-color="#1b1c1d"/><stop offset=".45" stop-color="#56595a"/><stop offset="1" stop-color="#151617"/>
</linearGradient>
<filter id="bla" x="-20%" y="-20%" width="140%" height="140%"><feGaussianBlur stdDeviation="1.6"/></filter>
<filter id="bl2a" x="-20%" y="-50%" width="140%" height="200%"><feGaussianBlur stdDeviation=".8"/></filter>
<filter id="bl3a" x="-20%" y="-20%" width="140%" height="140%"><feGaussianBlur stdDeviation="6"/></filter>
</defs>
<rect width="241" height="239" fill="url(#bga)"/>
<rect width="241" height="239" fill="url(#bgva)"/>
<g filter="url(#bl3a)">
<rect x="150" y="100" width="40" height="26" fill="#9fb6bd" opacity=".5"/>
<rect x="196" y="104" width="40" height="24" fill="#a9c0c8" opacity=".55"/>
<rect x="60" y="108" width="50" height="30" fill="#b9d2c8" opacity=".4"/>
<rect x="22" y="0" width="36" height="120" fill="#ffffff" opacity=".7"/>
<rect x="120" y="170" width="60" height="69" fill="#cfe0e4" opacity=".6"/>
<rect x="200" y="20" width="41" height="60" fill="#dfe9ee" opacity=".7"/>
</g>
<!-- propeller blur -->
<g filter="url(#bl2a)" fill="#3a4040">
<ellipse cx="62" cy="82" rx="36" ry="1.8" opacity=".5" transform="rotate(-7 62 82)"/>
<ellipse cx="118" cy="73.5" rx="40" ry="1.6" opacity=".45" transform="rotate(-2 118 73.5)"/>
<ellipse cx="212" cy="80" rx="24" ry="1.8" opacity=".5" transform="rotate(6 212 80)"/>
</g>
<!-- arms -->
<path d="M52 101 L98 93 L100 100 L54 107z" fill="#121314"/>
<path d="M168 90 L200 98 L199 105 L166 99z" fill="#121314"/>
<!-- body -->
<path d="M86 96 C90 86 104 83 122 82 L160 81.5 C168 81.5 172 86 172 93 L171 104 C170 112 164 117 156 119 L108 123 C98 124 90 120 86 113 C84 108 84 101 86 96z" fill="url(#bodya)"/>
<path d="M96 84.5 C110 81 150 80 166 82 C170 83 171.5 86 171.5 88 C150 85 112 86.5 94 90z" fill="#9aa3a3" opacity=".8"/>
<path d="M132 92 L170 90 L170 104 C169 111 164 115 157 117 L132 119z" fill="#120c0b"/>
<path d="M158 92 L164 91.5 L164 112 L158 114z" fill="#5a1a14" opacity=".7"/>
<!-- camera -->
<ellipse cx="87" cy="117" rx="4" ry="6.5" fill="#1a1b1c"/>
<ellipse cx="85.8" cy="117" rx="2" ry="4" fill="#4a4d4e"/>
<!-- feet -->
<rect x="96" y="122.5" width="8" height="5.5" rx="1" fill="#101112"/>
<rect x="118.5" y="125" width="8.5" height="4.5" rx="1" fill="#101112"/>
<rect x="131" y="121" width="8.5" height="4.5" rx="1" fill="#101112"/>
<rect x="151.5" y="120" width="8" height="5" rx="1" fill="#101112"/>
<!-- left motor -->
<rect x="43.5" y="80.5" width="7.5" height="5" rx="1" fill="#17181a"/>
<rect x="39.5" y="86" width="15" height="17" rx="1.5" fill="url(#mota)"/>
<rect x="39.5" y="91" width="15" height="1.2" fill="#0c0c0d"/><rect x="39.5" y="95" width="15" height="1.2" fill="#0c0c0d"/>
<path d="M37.5 101 h19.5 v7 c0 2-2 3.5-4 3.5 h-11.5 c-2 0-4-1.5-4-3.5z" fill="#0e0f10"/>
<ellipse cx="47" cy="113" rx="7" ry="1.8" fill="#ff9a6a"/><ellipse cx="47" cy="113" rx="4" ry="1" fill="#ffd9c0"/>
<!-- middle motor -->
<rect x="101" y="72" width="10" height="6" rx="1" fill="#17181a"/>
<rect x="97" y="78.5" width="18" height="18" rx="1.5" fill="url(#mota)"/>
<rect x="97" y="83.5" width="18" height="1.3" fill="#0c0c0d"/><rect x="97" y="88" width="18" height="1.3" fill="#0c0c0d"/>
<path d="M95 94 h22.5 v8 c0 2.5-2 4-4.5 4 h-13.5 c-2.5 0-4.5-1.5-4.5-4z" fill="#0e0f10"/>
<ellipse cx="106.5" cy="106.5" rx="9.5" ry="2.3" fill="#ff8a5a"/><ellipse cx="106.5" cy="106.3" rx="6" ry="1.2" fill="#ffe0cc"/>
<!-- right motor -->
<rect x="200.5" y="77" width="9" height="6" rx="1" fill="#17181a"/>
<rect x="197" y="83.5" width="16" height="17" rx="1.5" fill="url(#mota)"/>
<rect x="197" y="88.5" width="16" height="1.2" fill="#0c0c0d"/><rect x="197" y="92.5" width="16" height="1.2" fill="#0c0c0d"/>
<path d="M194.5 98.5 h20.5 v7.5 c0 2.5-2 4-4.5 4 h-11.5 c-2.5 0-4.5-1.5-4.5-4z" fill="#0e0f10"/>
<ellipse cx="205" cy="111" rx="7.5" ry="1.8" fill="#ff8a5a"/><ellipse cx="205" cy="110.8" rx="4.5" ry="1" fill="#ffd9c0"/>
<!-- hand -->
<path d="M0 181 C18 174 33 164 45 156 C52 150 62 147 76 146 C96 144 110 139 121 138.5 C129 137 138 140 138.5 147.5 C138.5 152 135 155 131 156 C140 154 152 150 162 147.5 C170 145 178 146 178 149 C178 151 174 153 170 154 C186 150 206 146 219 146.5 C227 147 229 151 226 155 C224 158 220 160 214 163 C204 169 192 173 180 178 C166 185 150 190 130 191 C104 193 82 197 65 204 C44 213 27 224 16 234 L11 239 L0 239z" fill="url(#handa)"/>
<path d="M45 157 C60 150 90 147 120 140 C130 138 137 142 137 147 C125 150 105 153 92 157 C75 162 60 170 48 178 C36 186 18 192 0 196 L0 181 C18 174 33 165 45 157z" fill="#c98f66" opacity=".5"/>
<path d="M60 190 C90 178 120 176 150 168 C175 161 200 156 224 153 C222 158 216 161 210 164 C198 170 188 174 178 178 C164 185 148 189 130 190 C104 192 82 196 65 203 C50 209 36 217 24 226 C30 212 42 198 60 190z" fill="#4a2814" opacity=".55" filter="url(#bla)"/>
<path d="M118 141 C126 139 136 141 136 147 C136 151 132 154 126 155 C120 154 116 150 118 141z" fill="#8a5230" opacity=".55"/>
</svg>
      <div class="abs" style="left:0;top:0;width:279px;height:160px;background:rgba(0,0,0,.25)"></div>
    </div>
    <!-- cookie button -->
    <svg style="left:1296px;top:862px" width="52" height="52" viewBox="0 0 52 52"><path d="M26 .8C12 .8 .8 12 .8 26S12 51.2 26 51.2 51.2 40 51.2 26c0-1.2-.1-2.3-.2-3.4-1.5.6-3.3.5-4.7-.300-1.3.800-2.9 1-4.4.600-1.6.700-3.4.600-4.9-.300-3.6-1.8-6.1-5.1-6.8-9-.9-1.3-1.2-2.9-.9-4.4-.9-1.3-1.2-2.9-.8-4.4-.8-1.1-1.2-2.5-1-3.9-.5-.1-1-.1-1.5-.1z" fill="#2b4464"/>
      <g fill="#b9c2c8"><circle cx="13.5" cy="24" r="3.9"/><circle cx="21.8" cy="15.5" r="2.4"/><circle cx="25.5" cy="27" r="2.4"/><circle cx="16" cy="36.8" r="3.1"/><circle cx="33.3" cy="38.3" r="3.7"/></g>
      <g fill="#2b4464"><circle cx="42.8" cy="2" r="2.3"/><circle cx="41" cy="11.8" r="2.3"/></g></svg>
    <!-- modal : target (689,360)-(1289,751) => page (640,275) -->
    <div class="abs" id="modal" style="left:640px;top:275px;width:600px;height:391px;background:#fff;border-radius:3px;box-shadow:0 2px 8px rgba(0,0,0,.25)">
      <div class="t" style="left:251.5px;top:17px;font-size:15px;font-weight:bold;color:#979797">Crop avatar</div>
      <svg style="left:569px;top:17px" width="14" height="14" viewBox="0 0 14 14" stroke="#222" stroke-width="3.2"><path d="M1.3 1.3l11.4 11.4M12.7 1.3 1.3 12.7"/></svg>
      <div class="t" style="left:147px;top:58px;font-size:13px;color:#9a9a9a">Select an area on the image to be used as the avatar</div>
      <div class="abs" style="left:179px;top:85px;width:242px;height:240px;overflow:hidden;background:#ddd">
        <svg style="left:0;top:0" width="242" height="240" viewBox="0 0 241 239" preserveAspectRatio="none">
<defs>
<linearGradient id="bgb" x1="0" y1="0" x2="1" y2="0">
<stop offset="0" stop-color="#f8fbfa"/><stop offset=".18" stop-color="#ffffff"/><stop offset=".3" stop-color="#eff5f3"/><stop offset=".42" stop-color="#f8fbfa"/><stop offset=".55" stop-color="#eff6f5"/><stop offset=".7" stop-color="#f3f8f8"/><stop offset=".85" stop-color="#e4edf1"/><stop offset="1" stop-color="#edf3f6"/>
</linearGradient>
<linearGradient id="bgvb" x1="0" y1="0" x2="0" y2="1">
<stop offset="0" stop-color="#ffffff" stop-opacity=".7"/><stop offset=".35" stop-color="#ffffff" stop-opacity=".3"/><stop offset=".5" stop-color="#a9c8cc" stop-opacity=".2"/><stop offset=".75" stop-color="#ffffff" stop-opacity=".2"/><stop offset="1" stop-color="#dbe7e7" stop-opacity=".35"/>
</linearGradient>
<linearGradient id="handb" x1="0" y1="0" x2="0" y2="1">
<stop offset="0" stop-color="#b97f56"/><stop offset=".3" stop-color="#9a5d38"/><stop offset=".65" stop-color="#6c3c21"/><stop offset="1" stop-color="#452413"/>
</linearGradient>
<linearGradient id="bodyb" x1="0" y1="0" x2="0" y2="1">
<stop offset="0" stop-color="#8b9291"/><stop offset=".18" stop-color="#2a2c2d"/><stop offset=".5" stop-color="#0d0e0f"/><stop offset="1" stop-color="#1a1615"/>
</linearGradient>
<linearGradient id="motb" x1="0" y1="0" x2="1" y2="0">
<stop offset="0" stop-color="#1b1c1d"/><stop offset=".45" stop-color="#56595a"/><stop offset="1" stop-color="#151617"/>
</linearGradient>
<filter id="blb" x="-20%" y="-20%" width="140%" height="140%"><feGaussianBlur stdDeviation="1.6"/></filter>
<filter id="bl2b" x="-20%" y="-50%" width="140%" height="200%"><feGaussianBlur stdDeviation=".8"/></filter>
<filter id="bl3b" x="-20%" y="-20%" width="140%" height="140%"><feGaussianBlur stdDeviation="6"/></filter>
</defs>
<rect width="241" height="239" fill="url(#bgb)"/>
<rect width="241" height="239" fill="url(#bgvb)"/>
<g filter="url(#bl3b)">
<rect x="150" y="100" width="40" height="26" fill="#9fb6bd" opacity=".5"/>
<rect x="196" y="104" width="40" height="24" fill="#a9c0c8" opacity=".55"/>
<rect x="60" y="108" width="50" height="30" fill="#b9d2c8" opacity=".4"/>
<rect x="22" y="0" width="36" height="120" fill="#ffffff" opacity=".7"/>
<rect x="120" y="170" width="60" height="69" fill="#cfe0e4" opacity=".6"/>
<rect x="200" y="20" width="41" height="60" fill="#dfe9ee" opacity=".7"/>
</g>
<!-- propeller blur -->
<g filter="url(#bl2b)" fill="#3a4040">
<ellipse cx="62" cy="82" rx="36" ry="1.8" opacity=".5" transform="rotate(-7 62 82)"/>
<ellipse cx="118" cy="73.5" rx="40" ry="1.6" opacity=".45" transform="rotate(-2 118 73.5)"/>
<ellipse cx="212" cy="80" rx="24" ry="1.8" opacity=".5" transform="rotate(6 212 80)"/>
</g>
<!-- arms -->
<path d="M52 101 L98 93 L100 100 L54 107z" fill="#121314"/>
<path d="M168 90 L200 98 L199 105 L166 99z" fill="#121314"/>
<!-- body -->
<path d="M86 96 C90 86 104 83 122 82 L160 81.5 C168 81.5 172 86 172 93 L171 104 C170 112 164 117 156 119 L108 123 C98 124 90 120 86 113 C84 108 84 101 86 96z" fill="url(#bodyb)"/>
<path d="M96 84.5 C110 81 150 80 166 82 C170 83 171.5 86 171.5 88 C150 85 112 86.5 94 90z" fill="#9aa3a3" opacity=".8"/>
<path d="M132 92 L170 90 L170 104 C169 111 164 115 157 117 L132 119z" fill="#120c0b"/>
<path d="M158 92 L164 91.5 L164 112 L158 114z" fill="#5a1a14" opacity=".7"/>
<!-- camera -->
<ellipse cx="87" cy="117" rx="4" ry="6.5" fill="#1a1b1c"/>
<ellipse cx="85.8" cy="117" rx="2" ry="4" fill="#4a4d4e"/>
<!-- feet -->
<rect x="96" y="122.5" width="8" height="5.5" rx="1" fill="#101112"/>
<rect x="118.5" y="125" width="8.5" height="4.5" rx="1" fill="#101112"/>
<rect x="131" y="121" width="8.5" height="4.5" rx="1" fill="#101112"/>
<rect x="151.5" y="120" width="8" height="5" rx="1" fill="#101112"/>
<!-- left motor -->
<rect x="43.5" y="80.5" width="7.5" height="5" rx="1" fill="#17181a"/>
<rect x="39.5" y="86" width="15" height="17" rx="1.5" fill="url(#motb)"/>
<rect x="39.5" y="91" width="15" height="1.2" fill="#0c0c0d"/><rect x="39.5" y="95" width="15" height="1.2" fill="#0c0c0d"/>
<path d="M37.5 101 h19.5 v7 c0 2-2 3.5-4 3.5 h-11.5 c-2 0-4-1.5-4-3.5z" fill="#0e0f10"/>
<ellipse cx="47" cy="113" rx="7" ry="1.8" fill="#ff9a6a"/><ellipse cx="47" cy="113" rx="4" ry="1" fill="#ffd9c0"/>
<!-- middle motor -->
<rect x="101" y="72" width="10" height="6" rx="1" fill="#17181a"/>
<rect x="97" y="78.5" width="18" height="18" rx="1.5" fill="url(#motb)"/>
<rect x="97" y="83.5" width="18" height="1.3" fill="#0c0c0d"/><rect x="97" y="88" width="18" height="1.3" fill="#0c0c0d"/>
<path d="M95 94 h22.5 v8 c0 2.5-2 4-4.5 4 h-13.5 c-2.5 0-4.5-1.5-4.5-4z" fill="#0e0f10"/>
<ellipse cx="106.5" cy="106.5" rx="9.5" ry="2.3" fill="#ff8a5a"/><ellipse cx="106.5" cy="106.3" rx="6" ry="1.2" fill="#ffe0cc"/>
<!-- right motor -->
<rect x="200.5" y="77" width="9" height="6" rx="1" fill="#17181a"/>
<rect x="197" y="83.5" width="16" height="17" rx="1.5" fill="url(#motb)"/>
<rect x="197" y="88.5" width="16" height="1.2" fill="#0c0c0d"/><rect x="197" y="92.5" width="16" height="1.2" fill="#0c0c0d"/>
<path d="M194.5 98.5 h20.5 v7.5 c0 2.5-2 4-4.5 4 h-11.5 c-2.5 0-4.5-1.5-4.5-4z" fill="#0e0f10"/>
<ellipse cx="205" cy="111" rx="7.5" ry="1.8" fill="#ff8a5a"/><ellipse cx="205" cy="110.8" rx="4.5" ry="1" fill="#ffd9c0"/>
<!-- hand -->
<path d="M0 181 C18 174 33 164 45 156 C52 150 62 147 76 146 C96 144 110 139 121 138.5 C129 137 138 140 138.5 147.5 C138.5 152 135 155 131 156 C140 154 152 150 162 147.5 C170 145 178 146 178 149 C178 151 174 153 170 154 C186 150 206 146 219 146.5 C227 147 229 151 226 155 C224 158 220 160 214 163 C204 169 192 173 180 178 C166 185 150 190 130 191 C104 193 82 197 65 204 C44 213 27 224 16 234 L11 239 L0 239z" fill="url(#handb)"/>
<path d="M45 157 C60 150 90 147 120 140 C130 138 137 142 137 147 C125 150 105 153 92 157 C75 162 60 170 48 178 C36 186 18 192 0 196 L0 181 C18 174 33 165 45 157z" fill="#c98f66" opacity=".5"/>
<path d="M60 190 C90 178 120 176 150 168 C175 161 200 156 224 153 C222 158 216 161 210 164 C198 170 188 174 178 178 C164 185 148 189 130 190 C104 192 82 196 65 203 C50 209 36 217 24 226 C30 212 42 198 60 190z" fill="#4a2814" opacity=".55" filter="url(#blb)"/>
<path d="M118 141 C126 139 136 141 136 147 C136 151 132 154 126 155 C120 154 116 150 118 141z" fill="#8a5230" opacity=".55"/>
</svg>
        <div class="abs" style="left:0;top:0;width:12px;height:240px;background:rgba(0,0,0,.5)"></div>
        <div class="abs" style="left:237px;top:0;width:5px;height:240px;background:rgba(0,0,0,.5)"></div>
        <div class="abs" style="left:12px;top:0;width:225px;height:3px;background:rgba(0,0,0,.5)"></div>
        <div class="abs" style="left:12px;top:228px;width:225px;height:12px;background:rgba(0,0,0,.5)"></div>
        <div class="abs" style="left:12px;top:3px;width:225px;height:225px;border:1px dashed #fff;outline:0"></div>
        <div class="abs" style="left:12px;top:3px;width:225px;height:225px;border:1px dashed rgba(0,0,0,.55);border-style:dashed;clip-path:none;opacity:.55"></div>
        <div class="hd" style="left:11px;top:2px"></div><div class="hd" style="left:122px;top:2px"></div><div class="hd" style="left:233px;top:2px"></div>
        <div class="hd" style="left:11px;top:113px"></div><div class="hd" style="left:233px;top:113px"></div>
        <div class="hd" style="left:11px;top:224px"></div><div class="hd" style="left:122px;top:224px"></div><div class="hd" style="left:233px;top:224px"></div>
      </div>
      <div class="abs" style="left:0;top:342px;width:600px;height:1px;background:#e4e4e4"></div>
      <div class="abs" style="left:300px;top:342px;width:1px;height:49px;background:#e4e4e4"></div>
      <div class="t" style="left:124.5px;top:361px;font-size:12.3px;letter-spacing:0;color:#3c3c3c;-webkit-text-stroke:.35px #3c3c3c">CANCEL</div>
      <div class="t" style="left:389.5px;top:361px;font-size:12.3px;letter-spacing:0;color:#4b8cc9;-webkit-text-stroke:.3px #4b8cc9">CREATE AVATAR</div>
      <svg style="left:490px;top:356px" width="21" height="21" viewBox="0 0 21 21" fill="none"><circle cx="10.5" cy="10.5" r="8.2" stroke="#e4e4e4" stroke-width="3.4"/><path d="M6.4 17.6A8.2 8.2 0 0 1 5 4.4" stroke="#9c9c9c" stroke-width="3.4"/></svg>
    </div>
    <!-- error text highlighted + hand drawn red marks (page coords = target - (49,85)) -->
    <div class="t" style="left:143.5px;top:452.5px;height:15px;line-height:15px;padding:0 1px;background:#0a78d6;color:#fff;font-size:12px;letter-spacing:-.02px">SyntaxError: JSON.parse: unexpected character at line 1 column 1 of the JSON data</div>
    <svg style="left:0;top:0" width="1367" height="939" viewBox="49 85 1367 939" fill="none" stroke="#ff0505" stroke-linecap="round" stroke-linejoin="round">
      <path d="M206 509 C196 509.5 185 510.5 177 512.5 C175.5 530 172 552 171.5 578.5 C182 578.5 193 576.5 203 573" stroke-width="13.5"/>
      <path d="M625 505.5 C635 503.5 646 501.5 654.5 502 C657.5 520 656 552 653.5 576.5 C645 578 636 578.5 628.5 578.5" stroke-width="14.5"/>
      <path d="M225 687 C245 660 275 618 302.5 573" stroke-width="12.5"/>
      <path d="M253 615 C270 603 288 588 302.5 573 C296 590 289 608 284 626" stroke-width="11.5"/>
      <path d="M300 576 L272 606 L288 604z" fill="#ff0505" stroke-width="3"/>
    </svg>

  </div>
</div>
</body>
</html>
